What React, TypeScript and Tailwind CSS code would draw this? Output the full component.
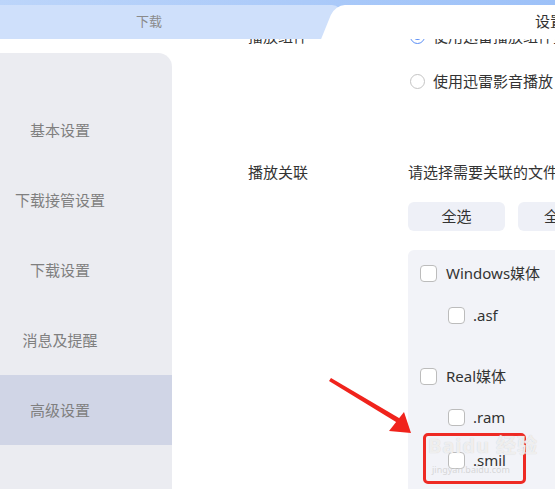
import React from "react";

const menu = ["基本设置", "下载接管设置", "下载设置", "消息及提醒", "高级设置"];

function Checkbox() {
  return <span className="inline-block h-[17px] w-[17px] shrink-0 rounded-[4px] border border-[#bcbcbc] bg-white" />;
}

function Radio({ checked }: { checked?: boolean }) {
  return (
    <span
      className={
        "flex h-[15px] w-[15px] shrink-0 items-center justify-center rounded-full border bg-white " +
        (checked ? "border-[#5a8ef5]" : "border-[#c4c4c4]")
      }
    >
      {checked && <span className="h-[7px] w-[7px] rounded-full bg-[#5a8ef5]" />}
    </span>
  );
}

function CheckRow({ label, sub, className }: { label: string; sub?: boolean; className?: string }) {
  return (
    <div className={"flex h-[22px] items-center " + (sub ? "gap-[8px] pl-[40px] " : "gap-[9px] pl-[12px] ") + (className || "")}>
      <Checkbox />
      <span>{label}</span>
    </div>
  );
}

export default function App() {
  return (
    <div
      className="relative flex h-[489px] w-[555px] flex-col overflow-hidden bg-white text-[15px] text-[#333]"
      style={{ fontFamily: '"Noto Sans", "Noto Sans CJK SC", sans-serif' }}
    >
      {/* tab bar */}
      <div className="z-10 flex h-[39px] shrink-0 bg-gradient-to-r from-[#bcd5fa] to-[#9dc1f8] pt-[5px]">
        <div className="flex w-[342px] items-center justify-center rounded-tr-[10px] bg-[#cfe0fb] pr-[44px] text-[13px] text-[#8a8a8a]">
          下载
        </div>
        <div className="relative flex-1 overflow-hidden rounded-tl-[10px] bg-white">
          <span className="absolute left-[193px] top-[5px] whitespace-nowrap text-[15px] leading-[22px] text-[#333]">设置</span>
        </div>
        <div className="absolute left-[328px] top-[5px] h-[34px] w-[30px] -skew-x-[22deg] rounded-tl-[10px] bg-white" />
      </div>

      {/* body */}
      <div className="flex min-h-0 flex-1">
        <div className="mt-[14px] w-[172px] shrink-0 rounded-tr-[14px] bg-[#ebecf1] pt-[42px]">
          {menu.map((m, i) => (
            <div
              key={m}
              className={
                "flex h-[70px] items-center justify-center pr-[52px] text-[#7f7f7f] " + (i === 4 ? "bg-[#d0d5e6]" : "")
              }
            >
              {m}
            </div>
          ))}
        </div>

        <div className="min-w-0 flex-1 overflow-hidden">
          <div className="-mt-[14px] pl-[76px]">
            {/* 播放组件 */}
            <div className="flex">
              <div className="flex h-[22px] w-[160px] shrink-0 items-center">播放组件</div>
              <div className="flex flex-col">
                <div className="flex h-[22px] items-center gap-[8px] whitespace-nowrap pl-[2px]">
                  <Radio checked />
                  <span>使用迅雷播放组件播放</span>
                </div>
                <div className="mt-[23px] flex h-[22px] items-center gap-[8px] whitespace-nowrap pl-[2px]">
                  <Radio />
                  <span>使用迅雷影音播放</span>
                </div>
              </div>
            </div>

            {/* 播放关联 */}
            <div className="mt-[69px] flex">
              <div className="flex h-[22px] w-[160px] shrink-0 items-center">播放关联</div>
              <div className="flex flex-col">
                <div className="flex h-[22px] items-center whitespace-nowrap">请选择需要关联的文件类型</div>
                <div className="mt-[19px] flex gap-[13px]">
                  <button className="flex h-[29px] w-[97px] items-center justify-center rounded-[6px] bg-[#eef0f7]">
                    全选
                  </button>
                  <button className="flex h-[29px] w-[97px] items-center justify-center rounded-[6px] bg-[#eef0f7]">
                    全不选
                  </button>
                </div>
                <div className="mt-[19px] h-[300px] w-[220px] rounded-[6px] bg-[#f2f3f8] pt-[12px]">
                  <CheckRow label="Windows媒体" />
                  <CheckRow label=".asf" sub className="mt-[20px]" />
                  <CheckRow label="Real媒体" className="mt-[39px]" />
                  <CheckRow label=".ram" sub className="mt-[19px]" />
                  <CheckRow label=".smil" sub className="mt-[21px]" />
                </div>
              </div>
            </div>
          </div>
        </div>
      </div>

      {/* annotation: red arrow + box */}
      <svg className="pointer-events-none absolute left-0 top-0" width="555" height="489" viewBox="0 0 555 489">
        <polygon points="329,381 331,378 399,418 401,425" fill="#f0231c" />
        <polygon points="411,433 389,431 404,412" fill="#f0231c" />
      </svg>
      <div className="pointer-events-none absolute left-[423px] top-[433px] h-[51px] w-[103px] rounded-[5px] border-[3px] border-[#ee2a24]" />

      {/* watermark */}
      <div className="pointer-events-none absolute left-[428px] top-[436px] whitespace-nowrap text-[20px] font-bold leading-none tracking-[1px] text-white/70 [text-shadow:0_0_1px_#c8c8c8]">
        Baidu 经验
      </div>
      <div className="pointer-events-none absolute left-[432px] top-[465px] whitespace-nowrap text-[9px] leading-none text-[#cfcfcf]/80">
        jingyan.baidu.com
      </div>
    </div>
  );
}
